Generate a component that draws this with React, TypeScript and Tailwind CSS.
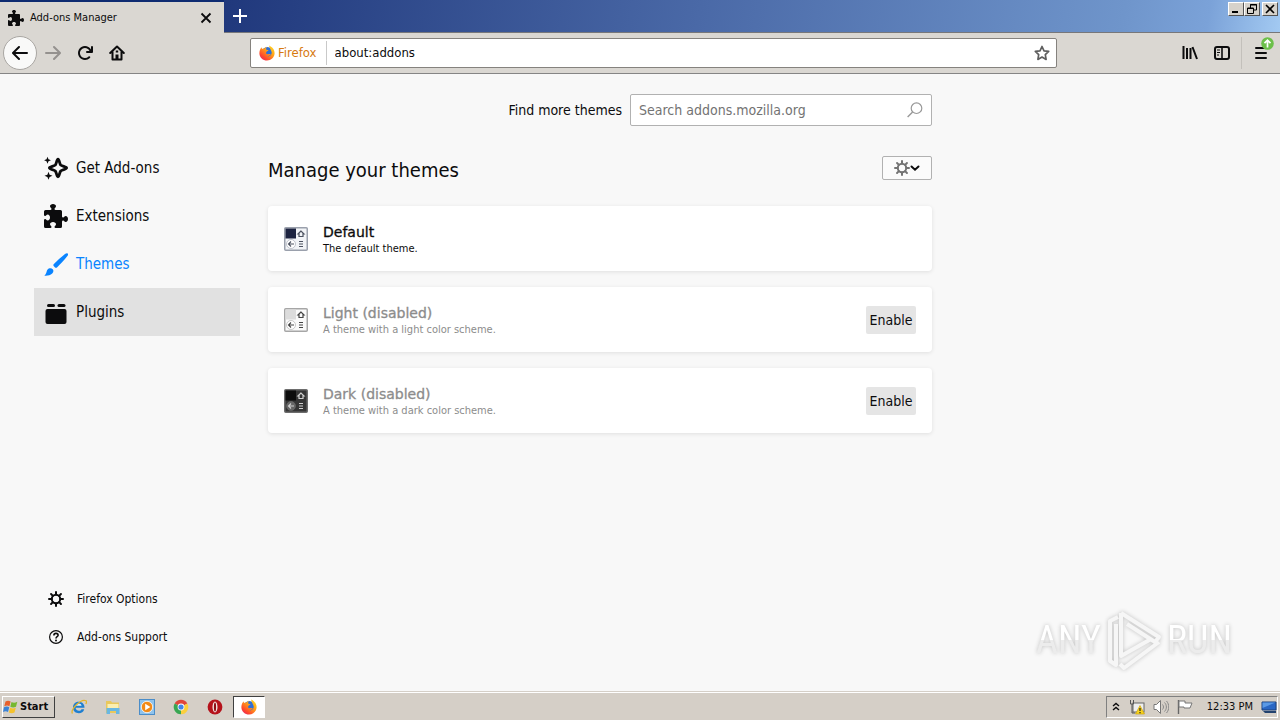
import clsx from "clsx";
import type React from "react";

const PUZZLE =
	"M14.5 8c-.971 0-1 1-1.75 1a.765.765 0 0 1-.75-.75V5a1 1 0 0 0-1-1H7.75A.765.765 0 0 1 7 3.25c0-.75 1-.779 1-1.75C8 .635 7.1 0 6 0S4 .635 4 1.5c0 .971 1 1 1 1.750a.765.765 0 0 1-.75.75H1a1 1 0 0 0-1 1v2.25A.765.765 0 0 0 .75 8c.75 0 .779-1 1.75-1C3.365 7 4 7.9 4 9s-.635 2-1.5 2c-.971 0-1-1-1.75-1a.765.765 0 0 0-.75.75V15a1 1 0 0 0 1 1h3.25a.765.765 0 0 0 .75-.75c0-.75-1-.779-1-1.75 0-.865.9-1.5 2-1.5s2 .635 2 1.5c0 .971-1 1-1 1.75a.765.765 0 0 0 .75.75H11a1 1 0 0 0 1-1v-3.25a.765.765 0 0 1 .75-.75c.75 0 .779 1 1.75 1 .865 0 1.5-.9 1.5-2s-.635-2-1.5-2z";

const BACK =
	"M15 7H3.414l4.293-4.293a1 1 0 0 0-1.414-1.414l-6 6a1 1 0 0 0 0 1.414l6 6a1 1 0 0 0 1.414-1.414L3.414 9H15a1 1 0 0 0 0-2z";

const RELOAD =
	"M15 1a1 1 0 0 0-1 1v2.418A6.995 6.995 0 1 0 8 15a6.954 6.954 0 0 0 4.95-2.05 1 1 0 0 0-1.414-1.414A5.019 5.019 0 1 1 12.549 6H10a1 1 0 0 0 0 2h5a1 1 0 0 0 1-1V2a1 1 0 0 0-1-1z";

interface IconProps {
	className?: string;
	children: React.ReactNode;
	viewBox?: string;
}

const Icon: React.FC<IconProps> = ({
	className = "size-4",
	viewBox = "0 0 16 16",
	children,
}) => (
	<svg
		aria-hidden="true"
		viewBox={viewBox}
		fill="currentColor"
		className={clsx("shrink-0", className)}
	>
		{children}
	</svg>
);

const Gear: React.FC<{ className?: string }> = ({ className }) => (
	<Icon className={className}>
		<circle cx="8" cy="8" r="4.2" fill="none" stroke="currentColor" strokeWidth="2" />
		{[0, 45, 90, 135, 180, 225, 270, 315].map((a) => (
			<path
				key={a}
				d="M8 1v2.6"
				stroke="currentColor"
				strokeWidth="2"
				strokeLinecap="round"
				transform={`rotate(${a} 8 8)`}
			/>
		))}
	</Icon>
);

const FirefoxLogo: React.FC<{ className?: string }> = ({ className }) => (
	<Icon className={className}>
		<defs>
			<linearGradient id="fox" x1="1" y1="0" x2="0.2" y2="1">
				<stop offset="0" stopColor="#ffe226" />
				<stop offset="0.45" stopColor="#ffa01a" />
				<stop offset="0.8" stopColor="#ff4a2b" />
				<stop offset="1" stopColor="#e8265f" />
			</linearGradient>
		</defs>
		<circle cx="8.4" cy="7.6" r="5.6" fill="#2f6fd6" />
		<path
			fill="url(#fox)"
			d="M10 .4c3.600 1.500 5.800 4.500 5.600 8.200-.3 4-3.600 7-7.600 7S.5 12.500.4 8.500C.3 6 1.200 3.600 2.600 2.200c0 .8.2 1.300.6 1.700.8-.4 1.700-.5 2.400-.3C6.100 2.700 6.900 2 7.900 1.800c-.8.9-.9 1.700-.7 2.400.3.700 1.500.7 2.200.9-.2 1-1.500 1.300-2.100 1.900-.3.500 0 1-.3 1.500.8.500 1.800 1 2.900.6 1-.3 2-.2 2.100.4-.9.2-1.700 1.700-3.600 1.800 2.500.5 4.400-1.200 4.300-3.700C12.500 5.200 10.500 3.500 10 .4z"
		/>
	</Icon>
);

interface ThemeSwatchProps {
	tab: string;
	bar: string;
	ink: string;
	edge: string;
	circle: string;
}

const ThemeSwatch: React.FC<ThemeSwatchProps> = ({ tab, bar, ink, edge, circle }) => (
	<Icon className="size-6" viewBox="0 0 24 24">
		<rect x="0.75" y="0.75" width="22.5" height="22.5" rx="1" fill={bar} stroke={edge} strokeWidth="1.5" />
		<rect x="1.5" y="1.5" width="10.5" height="10" fill={tab} />
		<circle cx="7" cy="17" r="4.500" fill={circle} stroke={edge} strokeWidth="0.600" />
		<path d="M10 17H4.500m2.500-2.500L4.500 17 7 19.500" fill="none" stroke={ink} strokeWidth="1.100" />
		<path d="M17 4l-3 3h1v2.500h4V7h1z" fill="none" stroke={ink} strokeWidth="1.200" />
		<path d="M15 14.500h4M15 17h4M15 19.500h4" stroke={ink} strokeWidth="1.100" />
	</Icon>
);

const navItems = [
	{
		label: "Get Add-ons",
		icon: (
			<Icon className="size-6" viewBox="0 0 24 24">
				<path
					fill="none"
					stroke="currentColor"
					strokeWidth="2.800"
					strokeLinejoin="round"
					d="M14 3.200c1.300 0 1.500 4.400 2.700 5.800 1.300 1.300 5.900 1.700 5.900 3s-4.600 1.700-5.900 3c-1.200 1.400-1.400 5.800-2.700 5.800s-1.500-4.400-2.700-5.800C10 13.700 5.400 13.300 5.400 12s4.600-1.700 5.900-3c1.200-1.400 1.400-5.800 2.700-5.800z"
				/>
				<path d="M3.500.8l1 2.500 2.400 1-2.400 1-1 2.500-1-2.500-2.400-1 2.400-1zM4.500 15.800l1.100 2.900 2.900 1.100-2.900 1.100-1.100 2.900-1.100-2.900-2.900-1.100 2.900-1.100z" />
			</Icon>
		),
	},
	{
		label: "Extensions",
		icon: (
			<Icon className="size-6">
				<path d={PUZZLE} />
			</Icon>
		),
	},
	{
		label: "Themes",
		selected: true,
		icon: (
			<Icon className="size-6" viewBox="0 0 24 24">
				<path d="M23.600 1.400c.7.600.5 1.700-.2 2.600-3 3.800-7.300 8.500-10.200 11.200-.8.8-1.700.7-2.400 0l-.9-.9c-.7-.7-.8-1.600 0-2.400C12.500 9.200 17.300 5.100 21 2c.9-.7 2-1.200 2.600-.6zM8.700 17.200c1.100 1.200.9 3.200-.5 4.400C6.200 23.300 3 24.200.3 23.700c1.200-1.100 1.800-2.400 2.300-4 .5-1.500 1-2.400 2.200-3.100 1.300-.7 2.900-.4 3.900.6z" />
			</Icon>
		),
	},
	{
		label: "Plugins",
		hovered: true,
		icon: (
			<Icon className="size-6" viewBox="0 0 24 24">
				<rect x="3" y="4" width="8" height="3" rx="1.500" />
				<rect x="13.500" y="4" width="8" height="3" rx="1.500" />
				<rect x="1.5" y="9" width="21" height="15" rx="2" />
			</Icon>
		),
	},
];

const themes = [
	{
		name: "Default",
		description: "The default theme.",
		enabled: true,
		colors: { tab: "#1c2340", bar: "#f2f4f7", ink: "#4c5260", edge: "#9aa0ac", circle: "#fff" },
	},
	{
		name: "Light (disabled)",
		description: "A theme with a light color scheme.",
		enabled: false,
		colors: { tab: "#dcdcdc", bar: "#fafafa", ink: "#444", edge: "#a6a6a6", circle: "#fff" },
	},
	{
		name: "Dark (disabled)",
		description: "A theme with a dark color scheme.",
		enabled: false,
		colors: { tab: "#0c0c0c", bar: "#353535", ink: "#d0d0d0", edge: "#6d6d6d", circle: "#666" },
	},
];

const toolButton = "flex size-8 items-center justify-center";
const windowButton =
	"flex h-[14px] w-4 items-center justify-center border border-t-white border-l-white border-r-[#555] border-b-[#555] bg-[#d6d2cb] text-black";

const TitleBar = () => (
	<div className="flex h-[33px] bg-linear-to-r from-[#0d2a70] to-[#12307a]">
		<div className="mt-[2px] flex w-56 items-center bg-[#dad7d2] pl-2">
			<Icon>
				<path d={PUZZLE} />
			</Icon>
			<span className="ml-1.5 flex-1 pt-px text-[11px]">Add-ons Manager</span>
			<button type="button" aria-label="Close tab" className="mr-3 flex size-3 items-center justify-center">
				<Icon className="size-3" viewBox="0 0 12 12">
					<path d="M1.500 1.500l9 9m0-9l-9 9" stroke="currentColor" strokeWidth="1.800" />
				</Icon>
			</button>
		</div>
		<div className="flex flex-1 items-start justify-between border-b border-[#77777a] bg-[linear-gradient(100deg,#20387c,#4a69a7_45%,#6f95cb_85%,#7ba2d8_93%,#a3caf2)]">
			<button type="button" aria-label="New tab" className="flex size-8 items-center justify-center text-white">
				<Icon>
					<path d="M8 1v14M1 8h14" stroke="currentColor" strokeWidth="2" />
				</Icon>
			</button>
			<div className="mt-[2px] mr-[2px] flex">
				<button type="button" aria-label="Minimize" className={windowButton}>
					<Icon className="size-3" viewBox="0 0 12 12">
						<path d="M2 8h6v2H2z" />
					</Icon>
				</button>
				<button type="button" aria-label="Restore" className={windowButton}>
					<Icon className="size-3" viewBox="0 0 12 12">
						<path d="M4.500 5V1.500h6V7H8M4 2h7M1.500 5h6v5.500h-6zM1 5.500h7" fill="none" stroke="currentColor" />
					</Icon>
				</button>
				<button type="button" aria-label="Close" className={clsx(windowButton, "ml-[2px]")}>
					<Icon className="size-3" viewBox="0 0 12 12">
						<path d="M2 2l8 8m0-8l-8 8" stroke="currentColor" strokeWidth="1.600" />
					</Icon>
				</button>
			</div>
		</div>
	</div>
);

const Toolbar = () => (
	<div className="flex h-[41px] items-center border-b border-[#858585] bg-[#dad7d2]">
		<button
			type="button"
			aria-label="Back"
			className="ml-[3px] flex size-[34px] items-center justify-center rounded-full border border-[#a9a6a2] bg-[#f9f9f8]"
		>
			<Icon>
				<path d={BACK} />
			</Icon>
		</button>
		<button type="button" aria-label="Forward" className={clsx(toolButton, "text-[#94918e]")}>
			<Icon className="size-4 rotate-180">
				<path d={BACK} />
			</Icon>
		</button>
		<button type="button" aria-label="Reload" className={toolButton}>
			<Icon>
				<path d={RELOAD} />
			</Icon>
		</button>
		<button type="button" aria-label="Home" className={toolButton}>
			<Icon>
				<path
					d="M1.200 8L8 1.500 14.800 8M3.500 7v7.500h9V7"
					fill="none"
					stroke="currentColor"
					strokeWidth="2"
					strokeLinecap="round"
					strokeLinejoin="round"
				/>
				<path d="M6.500 9.500h3V15h-3zM6.800 5.500h2.400v2H6.800z" />
			</Icon>
		</button>
		<div className="mx-[117px] flex h-[30px] flex-1 items-center rounded-[2px] border border-[#85827e] bg-white">
			<FirefoxLogo className="ml-2 size-4" />
			<span className="ml-[3px] text-[13px] text-[#d7790f]">Firefox</span>
			<span className="ml-[9px] h-6 w-px bg-[#c9c9c9]" />
			<input
				aria-label="Address"
				defaultValue="about:addons"
				className="min-w-0 flex-1 bg-transparent pl-2 text-[13px] outline-none"
			/>
			<button type="button" aria-label="Bookmark this page" className="mr-1.5 text-[#5e5e5e]">
				<Icon>
					<path
						d="M8 1.500l2 4.300 4.700.6-3.400 3.300.8 4.700L8 12.100l-4.100 2.300.8-4.700L1.300 6.400 6 5.800z"
						fill="none"
						stroke="currentColor"
						strokeWidth="1.700"
						strokeLinejoin="round"
					/>
				</Icon>
			</button>
		</div>
		<button type="button" aria-label="Library" className={toolButton}>
			<Icon>
				<path
					d="M1.500 1v13M5 3v11M8.500 3v11M10.500 2l4.500 12"
					stroke="currentColor"
					strokeWidth="2"
				/>
			</Icon>
		</button>
		<button type="button" aria-label="Sidebars" className={toolButton}>
			<Icon>
				<rect x="1" y="2" width="14" height="12" rx="2" fill="none" stroke="currentColor" strokeWidth="2" />
				<path d="M8 2v12" stroke="currentColor" strokeWidth="1.600" />
				<path d="M3 5h3M3 7.500h3M3 10h2" stroke="currentColor" />
			</Icon>
		</button>
		<span className="ml-[3px] h-8 w-px bg-[#c3c0bb]" />
		<button type="button" aria-label="Open menu" className="relative flex h-8 w-[38px] items-center justify-center">
			<Icon>
				<path
					d="M3 3h10M3 8h10M3 13h10"
					stroke="currentColor"
					strokeWidth="2"
					strokeLinecap="round"
				/>
			</Icon>
			<Icon className="absolute top-0 right-[6px] size-[13px]" viewBox="0 0 13 13">
				<circle cx="6.500" cy="6.500" r="6.300" fill="#6cc04a" />
				<path d="M6.500 10.500v-7M3.500 6.200l3-3 3 3" fill="none" stroke="#fff" strokeWidth="1.700" />
			</Icon>
		</button>
	</div>
);

const Sidebar = () => (
	<aside className="flex w-60 shrink-0 flex-col justify-between pt-[70px] pb-[35px] pl-[34px]">
		<nav>
			{navItems.map((item) => (
				<a
					key={item.label}
					href="#list"
					className={clsx("flex h-12 items-center gap-2 pl-2.5 text-[15px]", {
						"text-[#0a84ff]": item.selected,
						"bg-[#e1e1e1]": item.hovered,
					})}
				>
					{item.icon}
					{item.label}
				</a>
			))}
		</nav>
		<div>
			<a href="#options" className="flex h-[38px] items-center gap-[13px] pl-3.5 text-[12px]">
				<Gear className="size-4" />
				Firefox Options
			</a>
			<a href="#support" className="flex h-[38px] items-center gap-[13px] pl-3.5 text-[12px]">
				<Icon>
					<circle cx="8" cy="8" r="6.400" fill="none" stroke="currentColor" strokeWidth="1.200" />
					<path
						d="M5.900 6.400c0-1.200.9-2 2.100-2s2.100.7 2.100 1.800c0 1.500-2.100 1.500-2.100 3.200"
						fill="none"
						stroke="currentColor"
						strokeWidth="1.600"
					/>
					<circle cx="8" cy="11.400" r="1" />
				</Icon>
				Add-ons Support
			</a>
		</div>
	</aside>
);

const ThemeList = () => (
	<main className="ml-7 max-w-[664px] flex-1 pt-5">
		<div className="flex items-center justify-end gap-2">
			<label htmlFor="search" className="text-[14px]">
				Find more themes
			</label>
			<div className="flex h-8 w-[302px] items-center rounded-[2px] border border-[#b1b1b1] bg-white px-2">
				<input
					id="search"
					type="text"
					placeholder="Search addons.mozilla.org"
					className="min-w-0 flex-1 text-[14px] outline-none placeholder:text-[#737373]"
				/>
				<Icon className="size-4 text-[#999]">
					<circle cx="9.500" cy="6.200" r="5.300" fill="none" stroke="currentColor" strokeWidth="1.200" />
					<path d="M5.600 10L.6 15" stroke="currentColor" strokeWidth="1.400" />
				</Icon>
			</div>
		</div>
		<div className="mt-[30px] flex items-start justify-between">
			<h1 className="text-[20px] leading-7">Manage your themes</h1>
			<button
				type="button"
				aria-label="Tools for all add-ons"
				className="flex h-6 w-[50px] items-center justify-center rounded-[2px] border border-[#b1b1b1] bg-[#fbfbfb]"
			>
				<Gear className="size-4 text-[#737373]" />
				<Icon className="size-2.5" viewBox="0 0 10 10">
					<path
						d="M1.500 3.500L5 6.700l3.500-3.200"
						fill="none"
						stroke="currentColor"
						strokeWidth="2"
						strokeLinecap="round"
					/>
				</Icon>
			</button>
		</div>
		<ul className="mt-[22px] flex flex-col gap-4">
			{themes.map((theme) => (
				<li
					key={theme.name}
					className="flex h-[65px] items-center rounded-[4px] bg-white px-4 shadow-[0_1px_4px_rgba(12,12,13,0.1)]"
				>
					<ThemeSwatch {...theme.colors} />
					<div className={clsx("ml-[15px] flex-1 pt-[2px]", !theme.enabled && "text-[#8c8c8c]")}>
						<h2 className="font-['DejaVu_Sans',sans-serif] text-[14px] leading-[18px] [-webkit-text-stroke:0.3px]">
							{theme.name}
						</h2>
						<p className="text-[11px] leading-4">{theme.description}</p>
					</div>
					{!theme.enabled && (
						<button type="button" className="h-7 w-[50px] rounded-[2px] bg-[#e5e5e5] pt-px text-[14px]">
							Enable
						</button>
					)}
				</li>
			))}
		</ul>
	</main>
);

const PLAY = "M13 8L5 12v40l6 4V15M16 4v43l30-17M16 4l38 24-4 5-28-18M54 33L19 59l-4-4";

const Watermark = () => (
	<div className="absolute right-12 bottom-5 flex items-center gap-1 font-['Roboto_Condensed','Roboto',sans-serif] text-[38px] leading-[62px] drop-shadow-[0_0_2px_#c0c0c0]">
		<span className="bg-linear-to-b from-white from-50% to-[#ececec] to-50% bg-clip-text text-transparent">
			ANY
		</span>
		<Icon className="h-[62px] w-[58px]" viewBox="0 0 58 62">
			<path d={PLAY} fill="none" stroke="#f6f6f6" strokeWidth="4" strokeLinejoin="round" />
		</Icon>
		<span className="bg-linear-to-b from-white from-50% to-[#ececec] to-50% bg-clip-text text-transparent">
			RUN
		</span>
	</div>
);

const launchers = [
	{
		label: "Internet Explorer",
		icon: (
			<Icon>
				<path d="M13.500 8.800H4.600c.2 3.600 5.200 3.900 5.800 1.400h2.800c-1 5.600-11.400 5.500-11.200-2 .2-7.700 12-7.200 11.500.6z" fill="#1f7fd0" />
				<path d="M4.700 6.800h5.900c-.4-2.900-5.400-3-5.900 0z" fill="#dceefa" />
				<path d="M1.500 14.500C-1 11 10-1 15 1.800c1 .7.500 2-.3 3.100" fill="none" stroke="#e2b52c" strokeWidth="1.300" />
			</Icon>
		),
	},
	{
		label: "Windows Explorer",
		icon: (
			<Icon>
				<path d="M1 2h5l1 1.500h7V14H1z" fill="#e9c85c" />
				<path d="M2.500 5h11v5h-11z" fill="#fbeeb0" />
				<path d="M1.500 9h13v6H11v-3H5v3H1.500z" fill="#69b7e2" />
			</Icon>
		),
	},
	{
		label: "Media Player",
		icon: (
			<Icon>
				<rect x="0.500" y="0.500" width="15" height="15" fill="#8fc3ec" stroke="#4b8dc8" />
				<circle cx="8" cy="8" r="5.700" fill="#f28a16" stroke="#fff" strokeWidth="0.800" />
				<path d="M6.200 4.800L11.400 8l-5.200 3.200z" fill="#fff" />
			</Icon>
		),
	},
	{
		label: "Chrome",
		icon: (
			<Icon>
				<path d="M8 8L1.700 4.400A7.200 7.200 0 0 1 14.300 4.400z" fill="#e0453a" />
				<path d="M8 8L8 15.200A7.200 7.200 0 0 1 1.700 4.400z" fill="#39a652" />
				<path d="M8 8l6.300-3.600A7.200 7.200 0 0 1 8 15.200z" fill="#fbcf3c" />
				<circle cx="8" cy="8" r="3.400" fill="#fff" />
				<circle cx="8" cy="8" r="2.600" fill="#4285e8" />
			</Icon>
		),
	},
	{
		label: "Opera",
		icon: (
			<Icon>
				<ellipse cx="8" cy="8" rx="7.4" ry="7.500" fill="#b5121b" />
				<ellipse cx="8" cy="8" rx="2.500" ry="5.4" fill="#f3e6e4" />
				<ellipse cx="8" cy="8" rx="1.100" ry="4.600" fill="#8d0d14" />
			</Icon>
		),
	},
];

const Taskbar = () => (
	<footer className="flex h-7 shrink-0 items-center border-t border-white bg-[#d5cfc7] text-[11px]">
		<button
			type="button"
			className="ml-[2px] flex h-[22px] w-[53px] items-center gap-px border border-t-white border-l-white border-r-[#404040] border-b-[#404040] pt-px font-bold"
		>
			<Icon>
				<path d="M2.500 2.500C4.500 1.300 6 1.600 7.600 2.500L6.400 7.200C5 6.300 3.200 6.300 1.300 7.300z" fill="#e8602c" />
				<path d="M8.500 3c1.800 1 3.500 1 5.800-.2L13 7.700c-2 1.100-4 1-5.700 0z" fill="#76b82f" />
				<path d="M1 8.300c2-1 3.700-1 5.200-.1L5 12.900c-1.600-.9-3.300-.9-5 .1z" fill="#3b83d6" />
				<path d="M7.100 8.700c1.700 1 3.600 1 5.700 0l-1.300 4.800c-2 1-3.900 1-5.600 0z" fill="#f5c22c" />
			</Icon>
			Start
		</button>
		<div className="ml-4 flex gap-[18px]">
			{launchers.map((launcher) => (
				<button type="button" key={launcher.label} aria-label={launcher.label}>
					{launcher.icon}
				</button>
			))}
		</div>
		<button
			type="button"
			aria-label="Firefox"
			className="ml-[10px] flex h-[22px] w-8 items-center justify-center border border-t-[#404040] border-l-[#404040] border-r-white border-b-white bg-white"
		>
			<FirefoxLogo className="size-4" />
		</button>
		<div className="mr-[2px] ml-auto flex h-[22px] items-center border border-t-[#808080] border-l-[#808080] border-r-white border-b-white pt-px pl-1">
			<Icon className="size-2.5" viewBox="0 0 10 10">
				<path d="M2 4l3-2.500L8 4M2 8l3-2.500L8 8" fill="none" stroke="currentColor" strokeWidth="1.400" />
			</Icon>
			<Icon className="ml-2 size-4">
				<rect x="4" y="4" width="11" height="9" fill="#eee" stroke="#666" />
				<path d="M1.500 1v4h3V1M3 5v9h3" fill="none" stroke="#555" />
				<path d="M11 6.500l4.500 8.500h-9z" fill="#f7d21e" stroke="#c79c00" strokeWidth="0.600" />
				<path d="M11 9v3m0 1v1.200" stroke="#222" strokeWidth="1.200" />
			</Icon>
			<Icon className="ml-2 size-4">
				<path d="M1 5.500h2.500L7.500 1.500v13l-4-4H1z" fill="#fff" stroke="#777" />
				<path d="M9.500 5.500c1.300 1.500 1.300 3.500 0 5M11.500 3.500c2.500 2.500 2.500 6.500 0 9M13.500 2c3 3.500 3 8.500 0 12" fill="none" stroke="#888" />
			</Icon>
			<Icon className="ml-2 size-4">
				<path d="M1.500 1v14" stroke="#666" strokeWidth="1.400" />
				<path d="M2 2h6v2h7l-2 5H7V8H2z" fill="#fff" stroke="#777" />
			</Icon>
			<span className="ml-3.5">12:33 PM</span>
			<Icon className="ml-2 size-4">
				<path d="M1 3h14v8H1z" fill="#2a67c4" stroke="#1d437f" />
				<path d="M1.500 3.500h13L1.500 9z" fill="#5b9ae6" />
				<path d="M2 12h13v2H4z" fill="#23436f" />
			</Icon>
		</div>
	</footer>
);

export default function App() {
	return (
		<div className="flex h-screen flex-col bg-[#f8f8f8] font-['DejaVu_Sans_Condensed','DejaVu_Sans',sans-serif] text-[#0c0c0d]">
			<TitleBar />
			<Toolbar />
			<div className="relative flex min-h-0 flex-1 border-b border-[#d5cfc7]">
				<Sidebar />
				<ThemeList />
				<Watermark />
			</div>
			<Taskbar />
		</div>
	);
}
